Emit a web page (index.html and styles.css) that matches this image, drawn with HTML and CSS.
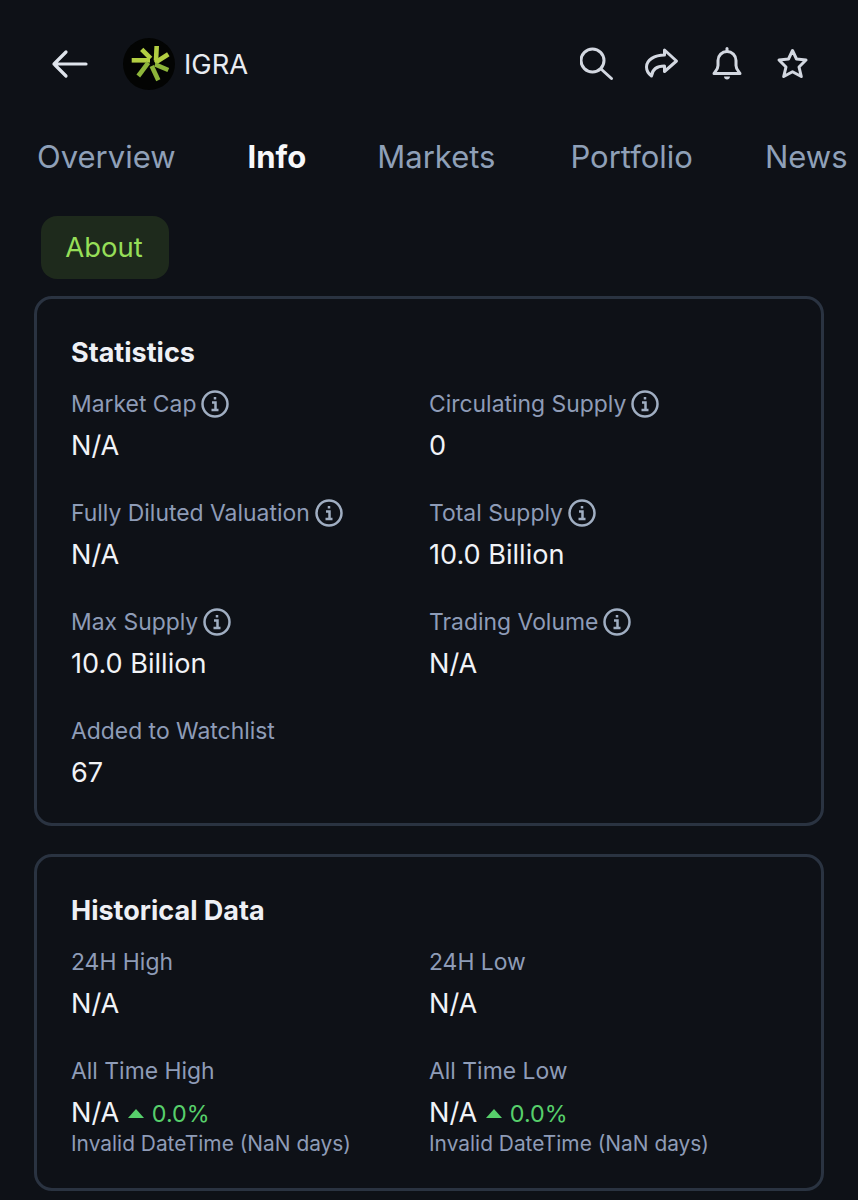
FILE: index.html
```html
<!DOCTYPE html>
<html lang="en">
<head>
    <meta charset="UTF-8">
    <meta name="viewport" content="width=device-width, initial-scale=1.0">
    <title>IGRA</title>
    <link rel="stylesheet" href="styles.css">
</head>
<body>
    <!-- header -->
    <header class="top-bar">
        <svg class="back-icon" viewBox="0 0 38 30" width="38" height="30">
            <path d="M35 15H3M15 3L3 15l12 12"/>
        </svg>
        <div class="logo">
            <svg viewBox="0 0 52 52" width="52" height="52">
                <circle cx="26" cy="26" r="26" fill="#030403"/>
                <g class="logo-blades">
                    <path d="M18.700 11.300L27.700 20.300"/>
                    <path d="M8.700 22.300H27"/>
                    <path d="M33.700 8L33 22.300"/>
                    <path d="M45.300 16.300L32 24.700"/>
                </g>
                <g class="logo-blades logo-blades-low">
                    <path d="M15.300 38L25.300 24.700"/>
                    <path d="M32 26.300L45.300 32"/>
                    <path d="M28.700 28L35.300 42.300"/>
                </g>
            </svg>
        </div>
        <span class="coin-name">IGRA</span>
        <div class="top-actions">
            <svg class="action-icon" viewBox="0 0 34 34" width="34" height="34">
                <circle cx="12.500" cy="13.500" r="11.500"/>
                <path d="M21 22L31.500 31.500"/>
            </svg>
            <svg class="action-icon" viewBox="0 0 34 34" width="34" height="34">
                <path d="M19.500 3L31.500 14 19.500 24.500V19C13.500 19 7.500 21 6.500 29 2.500 26 1.500 23 1.500 20 1.500 13 9.500 8 19.500 8Z"/>
            </svg>
            <svg class="action-icon" viewBox="0 0 34 34" width="34" height="34">
                <path d="M4 26.500c0-1 4-3 4-8v-5a9 9 0 0 1 18 0v5c0 5 4 7 4 8z"/>
                <path d="M17 1.500v3"/>
                <path class="clapper" d="M14 29.500h6c0 2-1.500 3-3 3s-3-1-3-3z"/>
            </svg>
            <svg class="action-icon" viewBox="0 0 34 34" width="34" height="34">
                <path d="M17.500 3.500l4 8.500 9.500 1-7 7 2.300 9.500-8.800-4.800-8.800 4.800 2.300-9.500-7-7 9.500-1z"/>
            </svg>
        </div>
    </header>

    <nav class="tabs">
        <a>Overview</a>
        <a class="active">Info</a>
        <a>Markets</a>
        <a>Portfolio</a>
        <a>News</a>
    </nav>

    <div class="chip">About</div>

    <section class="card">
        <h2>Statistics</h2>
        <div class="stat-grid">
            <div class="stat">
                <div class="label">Market Cap<svg class="info" viewBox="0 0 28 28"><circle cx="14" cy="14" r="12.500"/><path d="M11 12.500h3.500v7M10.500 20h7M14 7v2.500"/></svg></div>
                <div class="value">N/A</div>
            </div>
            <div class="stat">
                <div class="label">Circulating Supply<svg class="info" viewBox="0 0 28 28"><circle cx="14" cy="14" r="12.500"/><path d="M11 12.500h3.500v7M10.500 20h7M14 7v2.500"/></svg></div>
                <div class="value">0</div>
            </div>
            <div class="stat">
                <div class="label">Fully Diluted Valuation<svg class="info" viewBox="0 0 28 28"><circle cx="14" cy="14" r="12.500"/><path d="M11 12.500h3.500v7M10.500 20h7M14 7v2.500"/></svg></div>
                <div class="value">N/A</div>
            </div>
            <div class="stat">
                <div class="label">Total Supply<svg class="info" viewBox="0 0 28 28"><circle cx="14" cy="14" r="12.500"/><path d="M11 12.500h3.500v7M10.500 20h7M14 7v2.500"/></svg></div>
                <div class="value">10.0 Billion</div>
            </div>
            <div class="stat">
                <div class="label">Max Supply<svg class="info" viewBox="0 0 28 28"><circle cx="14" cy="14" r="12.500"/><path d="M11 12.500h3.500v7M10.500 20h7M14 7v2.500"/></svg></div>
                <div class="value">10.0 Billion</div>
            </div>
            <div class="stat">
                <div class="label">Trading Volume<svg class="info" viewBox="0 0 28 28"><circle cx="14" cy="14" r="12.500"/><path d="M11 12.500h3.500v7M10.500 20h7M14 7v2.500"/></svg></div>
                <div class="value">N/A</div>
            </div>
            <div class="stat stat-last">
                <div class="label">Added to Watchlist</div>
                <div class="value">67</div>
            </div>
        </div>
    </section>

    <section class="card">
        <h2>Historical Data</h2>
        <div class="stat-grid">
            <div class="stat">
                <div class="label">24H High</div>
                <div class="value">N/A</div>
            </div>
            <div class="stat">
                <div class="label">24H Low</div>
                <div class="value">N/A</div>
            </div>
            <div class="stat stat-tall">
                <div class="label">All Time High</div>
                <div class="value">N/A <span class="change"><i class="arrow"></i>0.0%</span></div>
                <div class="date">Invalid DateTime (NaN days)</div>
            </div>
            <div class="stat stat-tall">
                <div class="label">All Time Low</div>
                <div class="value">N/A <span class="change"><i class="arrow"></i>0.0%</span></div>
                <div class="date">Invalid DateTime (NaN days)</div>
            </div>
        </div>
    </section>
</body>
</html>
```
FILE: styles.css
```css
body {
    margin: 0;
    padding: 0;
    height: 1200px;
    overflow: hidden;
    background-color: #0e1117;
    color: #f1f3f7;
    font-family: 'Inter', 'Liberation Sans', sans-serif;
}

.top-bar {
    display: flex;
    align-items: center;
    height: 52px;
    padding: 38px 0 0 51px;
}

.back-icon {
    fill: none;
    stroke: #dfe4ec;
    stroke-width: 3.2;
    stroke-linecap: round;
    stroke-linejoin: round;
}

.logo {
    display: flex;
    margin-left: 34px;
}

.logo-blades path {
    fill: none;
    stroke: #b2ce42;
    stroke-width: 4.600;
}

.logo-blades-low path {
    stroke: #8db53a;
}

.coin-name {
    margin-left: 9px;
    font-size: 27.300px;
    color: #e8ebf1;
}

.top-actions {
    display: flex;
    gap: 31px;
    margin-left: auto;
    margin-right: 49px;
}

.action-icon {
    fill: none;
    stroke: #d3d8e1;
    stroke-width: 3;
    stroke-linecap: round;
    stroke-linejoin: round;
}

.action-icon .clapper {
    fill: #d3d8e1;
    stroke: none;
}

.tabs {
    display: flex;
    gap: 72px;
    margin-top: 47px;
    padding-left: 37px;
    font-size: 31px;
    line-height: 40px;
    color: #8fa0b8;
    white-space: nowrap;
}

.tabs .active {
    color: #f7f8fa;
    font-weight: 700;
}

.tabs a:nth-child(3) {
    margin-left: -1px;
}

.tabs a:nth-child(4) {
    margin-left: 3px;
}

.chip {
    width: 126px;
    height: 63px;
    margin: 39px 0 0 41px;
    padding-right: 2px;
    border-radius: 16px;
    background-color: #1e2a1c;
    color: #96de58;
    font-size: 27.500px;
    line-height: 63px;
    text-align: center;
}

.card {
    margin: 17px 34px 0;
    padding: 38px 34px 0;
    border: 3px solid #2a3341;
    border-radius: 18px;
}

.card + .card {
    margin-top: 28px;
}

.card h2 {
    margin: 0;
    font-size: 27px;
    line-height: 32px;
    font-weight: 700;
    color: #eef0f5;
}

.stat-grid {
    display: grid;
    grid-template-columns: 358px 1fr;
    margin-top: 19px;
}

.stat {
    height: 109px;
}

.stat-last {
    height: 108px;
}

.stat-tall {
    height: 133px;
}

.label {
    display: flex;
    align-items: center;
    gap: 5px;
    height: 32px;
    font-size: 22.900px;
    color: #8e9cb7;
    white-space: pre;
}

.info {
    width: 28px;
    height: 28px;
    fill: none;
    stroke: #a0aec2;
    stroke-width: 2.500;
}

.value {
    margin-top: 9px;
    font-size: 27.100px;
    line-height: 34px;
    color: #f1f3f7;
}

.change {
    margin-left: 1px;
    font-size: 23.300px;
    color: #57cf6b;
}

.arrow {
    display: inline-block;
    width: 0;
    height: 0;
    margin-right: 8px;
    vertical-align: 4px;
    border-left: 8px solid transparent;
    border-right: 8px solid transparent;
    border-bottom: 9px solid #57cf6b;
}

.date {
    font-size: 20.900px;
    line-height: 26px;
    color: #8e9cb7;
}
```
